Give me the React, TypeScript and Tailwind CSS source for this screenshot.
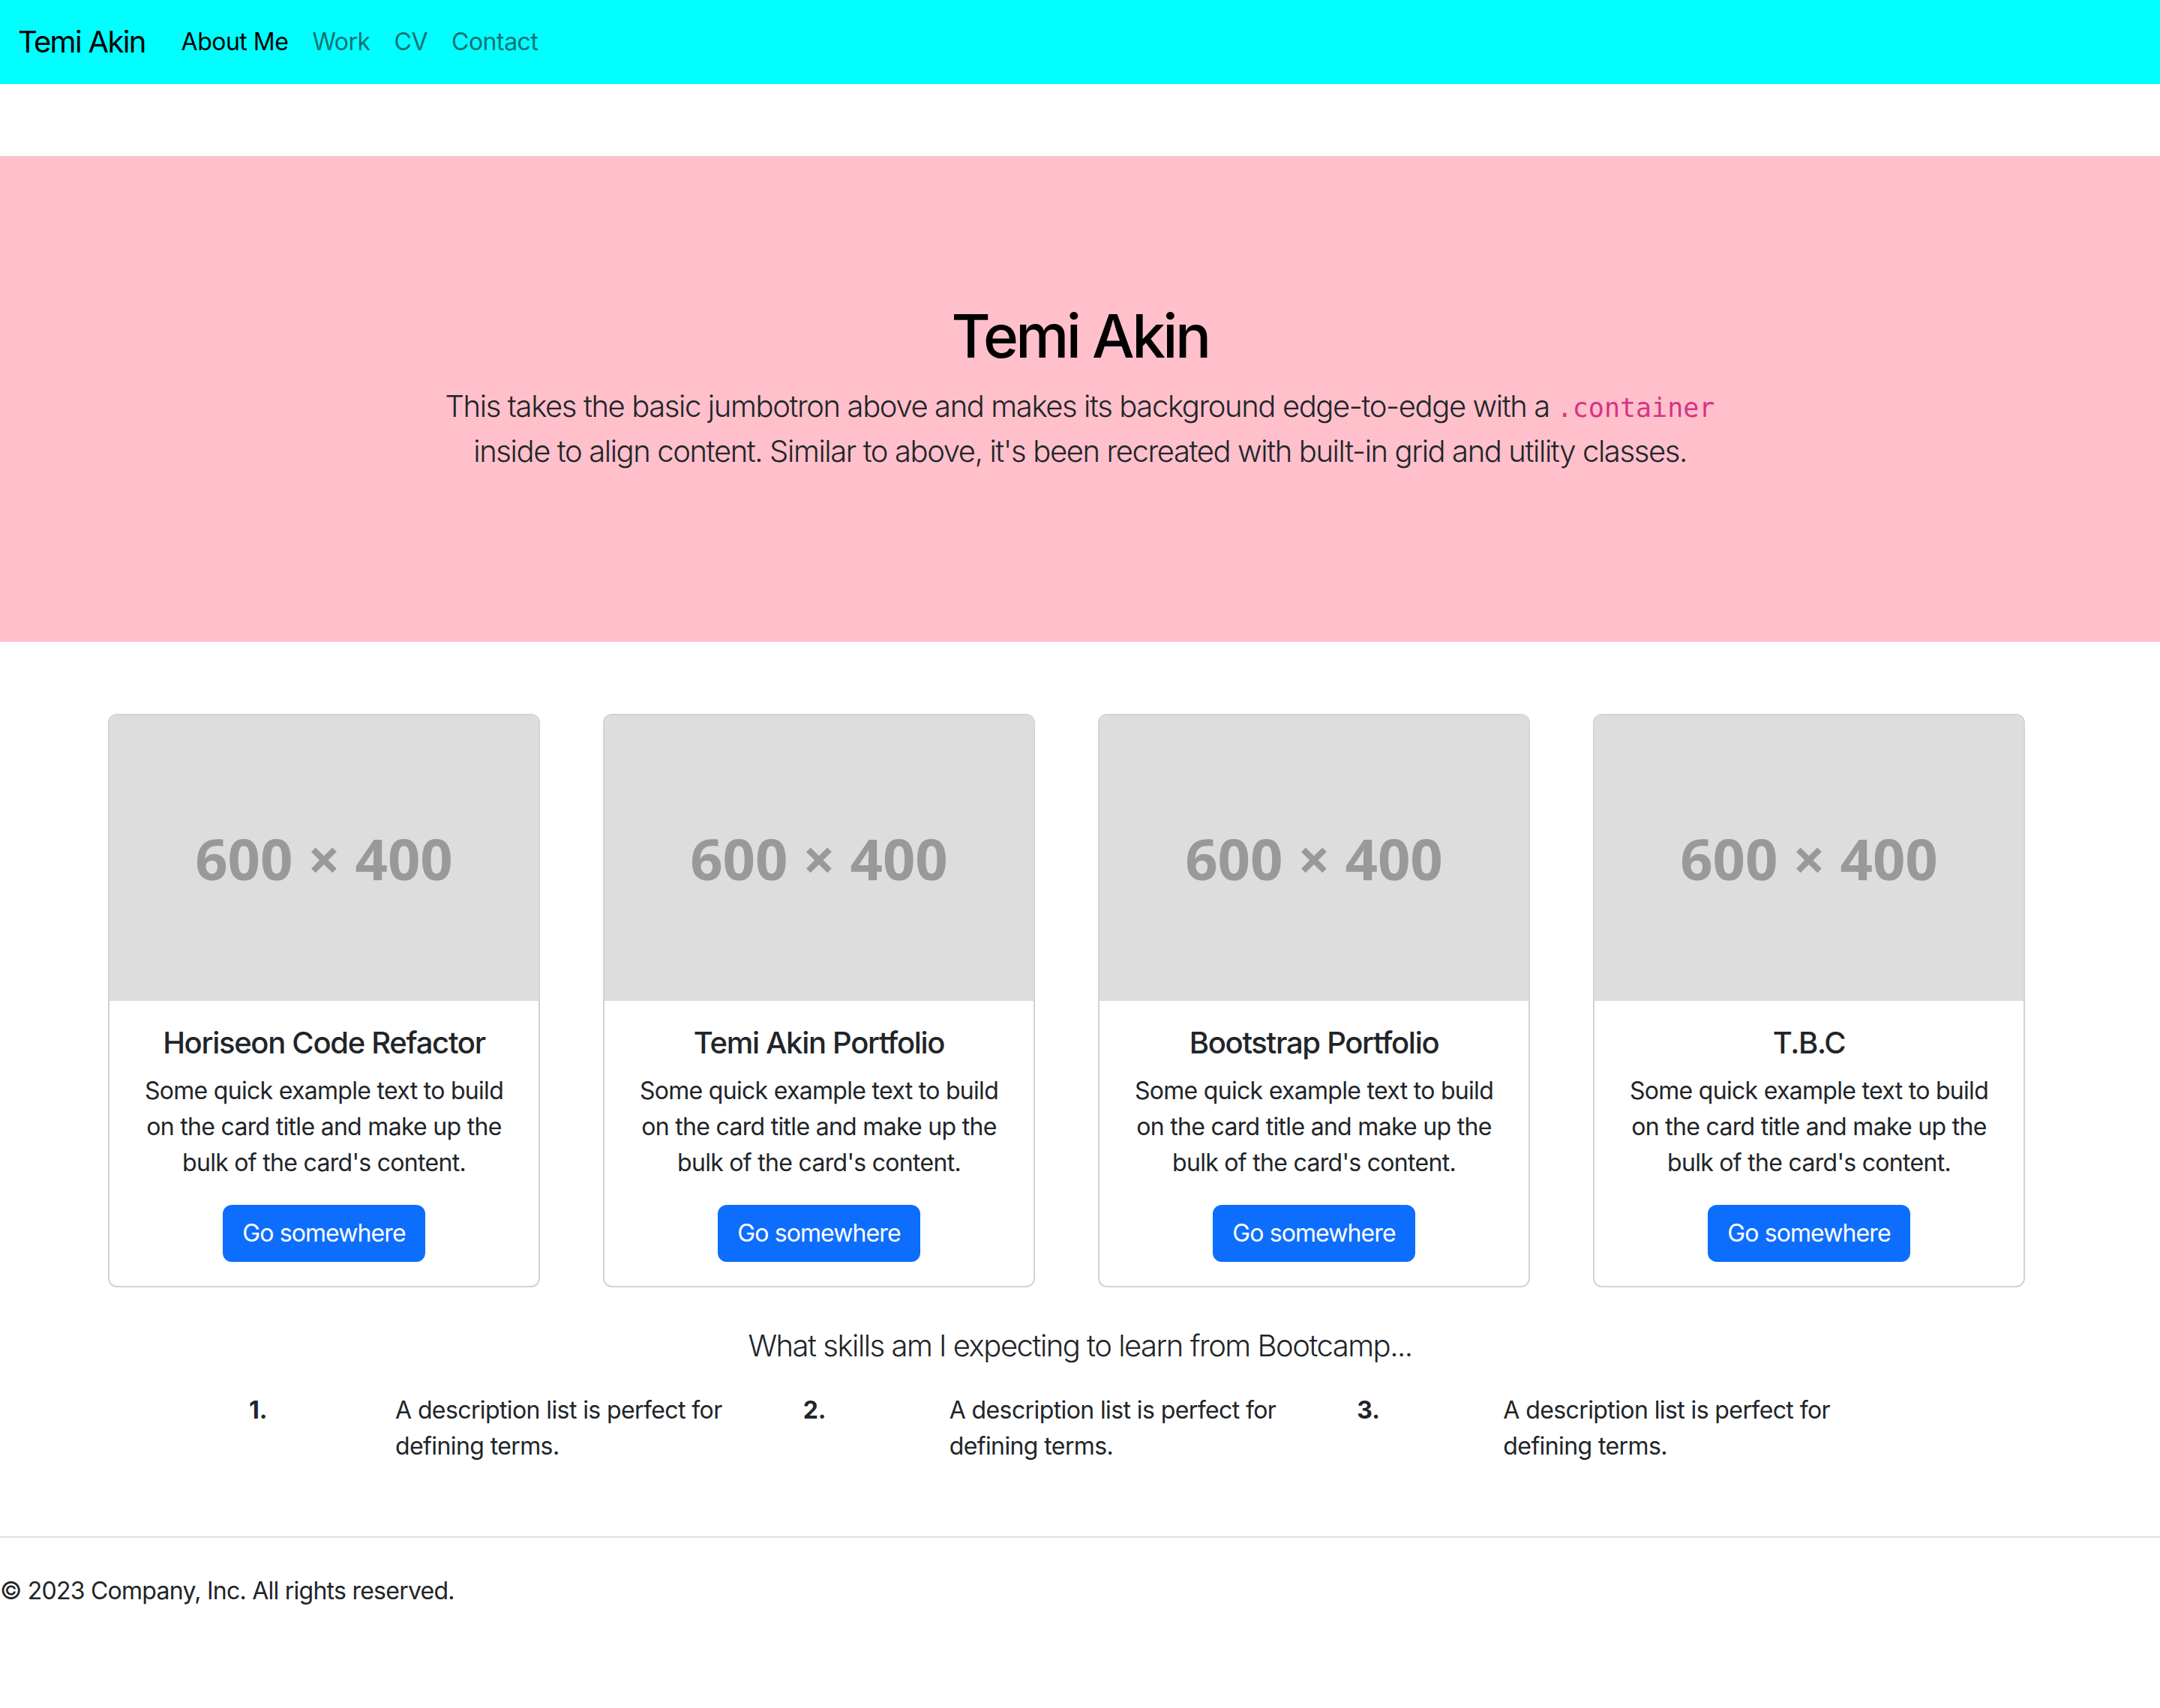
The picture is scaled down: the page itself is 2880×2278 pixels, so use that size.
import React from "react";

const projects = ["Horiseon Code Refactor", "Temi Akin Portfolio", "Bootstrap Portfolio", "T.B.C"];

const skills = ["1.", "2.", "3."];

const Card = ({ title }: { title: string }) => {
  return (
    <div className="px-[24px]">
      <div className="w-[576px] rounded-[12px] border-2 border-[#d3d3d3] bg-white overflow-hidden">
        <div className="h-[381px] bg-[#dddddd] flex items-center justify-center">
          <span className="font-['Open_Sans',sans-serif] font-bold text-[76px] text-[#999999]">
            600 × 400
          </span>
        </div>
        <div className="p-[32px] text-center">
          <h5 className="text-[40px] leading-[48px] font-medium mb-[16px] text-[#212529] tracking-[-1.3px]">{title}</h5>
          <p className="text-[32px] leading-[48px] mb-[32px] text-[#212529] tracking-[-0.7px]">
            Some quick example text to build on the card title and make up the bulk of the card's content.
          </p>
          <a className="inline-block bg-[#0d6efd] text-white text-[32px] leading-[48px] px-[24px] py-[12px] border-2 border-[#0d6efd] rounded-[12px] tracking-[-0.9px]">
            Go somewhere
          </a>
        </div>
      </div>
    </div>
  );
};

const App = () => {
  return (
    <div className="min-h-screen bg-white text-[#212529] font-['Inter',sans-serif]">
      {/* navbar */}
      <nav className="h-[112px] bg-[#00ffff] flex items-center px-[24px]">
        <span className="text-[40px] text-black mr-[32px] tracking-[-1.7px]">Temi Akin</span>
        <a className="text-[32px] px-[16px] text-black tracking-[-0.5px]">About Me</a>
        <a className="text-[32px] px-[16px] text-[#157174] tracking-[-0.5px]">Work</a>
        <a className="text-[32px] px-[16px] text-[#157174] tracking-[-0.5px]">CV</a>
        <a className="text-[32px] px-[16px] text-[#157174] tracking-[-0.5px]">Contact</a>
      </nav>

      {/* jumbotron */}
      <div className="mt-[96px] bg-[#ffc0cb] pt-[192px] pb-[192px] text-center">
        <h1 className="text-[80px] leading-[96px] font-medium text-black mb-[16px] tracking-[-3.6px]">Temi Akin</h1>
        <p className="text-[40px] leading-[60px] font-light mb-[32px] tracking-[-1.4px]">
          This takes the basic jumbotron above and makes its background edge-to-edge with a{" "}
          <code className="font-['DejaVu_Sans_Mono',monospace] text-[35px] leading-none tracking-normal text-[#d63384]">.container</code>
          <br />
          inside to align content. Similar to above, it's been recreated with built-in grid and utility classes.
        </p>
      </div>

      {/* cards */}
      <div className="w-[2640px] mx-auto mt-[96px] grid grid-cols-4">
        {projects.map((p) => (
          <Card key={p} title={p} />
        ))}
      </div>

      <p className="mt-[48px] text-center text-[40px] leading-[60px] font-light mb-[32px] tracking-[-1.5px]">
        What skills am I expecting to learn from Bootcamp...
      </p>

      <div className="w-[2216px] mx-auto grid grid-cols-3">
        {skills.map((s) => (
          <dl key={s} className="flex">
            <dt className="w-[195px] shrink-0 text-[32px] leading-[48px] font-bold">{s}</dt>
            <dd className="w-[500px] text-[32px] leading-[48px] tracking-[-0.6px]">A description list is perfect for defining terms.</dd>
          </dl>
        ))}
      </div>

      {/* footer */}
      <footer className="mt-[96px] border-t-2 border-[#dee2e6] py-[47px]">
        <p className="text-[32px] leading-[48px] text-[#212529] tracking-[-0.75px]">© 2023 Company, Inc. All rights reserved.</p>
      </footer>
    </div>
  );
};

export default App;
